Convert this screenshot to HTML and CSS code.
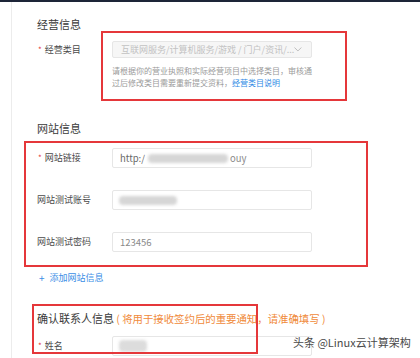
FILE: index.html
```html
<!DOCTYPE html>
<html lang="zh-CN">
<head>
<meta charset="utf-8">
<title>商户信息</title>
<link rel="stylesheet" href="styles.css">
</head>
<body>
<div class="page">
  <div class="topbar"></div>
  <div class="content">
    <section class="sec sec-biz">
      <h2 class="sec-title">经营信息</h2>
      <div class="row row-select">
        <div class="lbl lbl-select"><span class="req">*</span>经营类目</div>
        <div class="field">
          <div class="select">
            <span class="ph">互联网服务/计算机服务/游戏 / 门户/资讯/...</span>
            <svg class="chev" width="8" height="5" viewBox="0 0 8 5"><polyline points="0.5,0.5 4,4 7.5,0.5" fill="none" stroke="#b5b5b5" stroke-width="0.9"/></svg>
          </div>
          <p class="help">请根据你的营业执照和实际经营项目中选择类目，审核通<br>过后修改类目需要重新提交资料，<a class="link">经营类目说明</a></p>
        </div>
      </div>
    </section>

    <section class="sec sec-site">
      <h2 class="sec-title">网站信息</h2>
      <div class="row row-input first">
        <div class="lbl"><span class="req">*</span>网站链接</div>
        <div class="input"><span>http:/</span><span class="blur blur-url"></span><span class="tail">ouy</span></div>
      </div>
      <div class="row row-input">
        <div class="lbl">网站测试账号</div>
        <div class="input"><span class="blur blur-acc"></span></div>
      </div>
      <div class="row row-input">
        <div class="lbl">网站测试密码</div>
        <div class="input input-pwd"><span>123456</span></div>
      </div>
      <div class="add"><span class="plus">+</span>添加网站信息</div>
    </section>

    <section class="sec sec-contact">
      <h2 class="sec-title">确认联系人信息<span class="note"> ( 将用于接收签约后的重要通知，请准确填写 )</span></h2>
      <div class="row row-input first-tight">
        <div class="lbl"><span class="req">*</span>姓名</div>
        <div class="input"><span class="blur blur-name"></span></div>
      </div>
    </section>
  </div>

  <div class="mark mark-biz"></div>
  <div class="mark mark-site"></div>
  <div class="mark mark-contact"></div>
  <div class="watermark">头条 @Linux云计算架构</div>
</div>
</body>
</html>
```

FILE: styles.css
```css
html, body {
  margin: 0;
  padding: 0;
  background: #fff;
}
body {
  font-family: "Noto Sans CJK SC", "Microsoft YaHei", "Noto Sans", sans-serif;
}
.page {
  position: relative;
  width: 420px;
  height: 358px;
  overflow: hidden;
}
.topbar {
  height: 2px;
  background: #1d2538;
}
.content {
  margin-left: 11px;
  border-left: 1px solid #ececec;
  padding-left: 25px;
  padding-top: 14px;
  height: 356px;
  box-sizing: border-box;
}
.sec-title {
  margin: 0;
  font-size: 11px;
  line-height: 16px;
  font-weight: normal;
  color: #3a3a3a;
  white-space: nowrap;
}
.note {
  color: #f08a3a;
  font-size: 10.4px;
}
.row {
  display: flex;
  align-items: flex-start;
}
.lbl {
  width: 75px;
  flex: none;
  font-size: 9px;
  line-height: 20px;
  color: #4a4a4a;
  white-space: nowrap;
}
.lbl-select {
  line-height: 17px;
}
.req {
  color: #e4393c;
  font-size: 8px;
  margin-left: 1px;
  margin-right: 3px;
}
.row-select {
  margin-top: 9px;
}
.select {
  width: 200px;
  height: 17px;
  box-sizing: border-box;
  border: 1px solid #e6e6e6;
  border-radius: 2px;
  background: #f6f6f6;
  padding: 0 9px 0 8px;
  display: flex;
  align-items: center;
  justify-content: space-between;
}
.ph {
  font-size: 9px;
  color: #c2c2c2;
  white-space: nowrap;
}
.chev {
  display: block;
}
.help {
  margin: 7px 0 0;
  font-size: 8px;
  line-height: 12px;
  color: #9a9a9a;
  white-space: nowrap;
}
.link {
  color: #2f8ae5;
}
.sec-site {
  margin-top: 31px;
}
.row-input {
  margin-top: 22px;
}
.row-input.first {
  margin-top: 12px;
}
.row-input.first-tight {
  margin-top: 9px;
}
.input {
  width: 200px;
  height: 20px;
  box-sizing: border-box;
  border: 1px solid #e6e6e6;
  border-radius: 2px;
  background: #fff;
  padding: 0 7px;
  display: flex;
  align-items: center;
  font-size: 9.5px;
  color: #6a6a6a;
  white-space: nowrap;
}
.tail {
  color: #8a8a8a;
}
.input-pwd {
  color: #8a8a8a;
}
.blur {
  display: inline-block;
  height: 9px;
  background: #d6d6d6;
  border-radius: 4px;
  filter: blur(1.5px);
}
.blur-url {
  width: 80px;
  margin: 0 2px 0 3px;
}
.blur-acc {
  width: 58px;
  margin-left: -1px;
}
.blur-name {
  width: 28px;
  height: 12px;
  margin-left: -1px;
  background: #dcdcdc;
}
.add {
  margin-top: 19px;
  font-size: 9px;
  line-height: 14px;
  color: #3a8ee6;
  display: flex;
  align-items: center;
}
.plus {
  font-size: 10px;
  margin-left: 2px;
  margin-right: 5px;
}
.sec-contact {
  margin-top: 25px;
}
.mark {
  position: absolute;
  box-sizing: border-box;
  border: 2px solid #e5373a;
}
.mark-biz {
  left: 101px;
  top: 31px;
  width: 246px;
  height: 70px;
}
.mark-site {
  left: 24px;
  top: 141px;
  width: 344px;
  height: 126px;
}
.mark-contact {
  left: 32px;
  top: 304px;
  width: 226px;
  height: 50px;
}
.watermark {
  position: absolute;
  left: 293px;
  top: 335px;
  font-size: 11px;
  line-height: 14px;
  color: #4a4a4a;
  white-space: nowrap;
  text-shadow: 0 0 2px #fff, 0 0 2px #fff;
}
```
